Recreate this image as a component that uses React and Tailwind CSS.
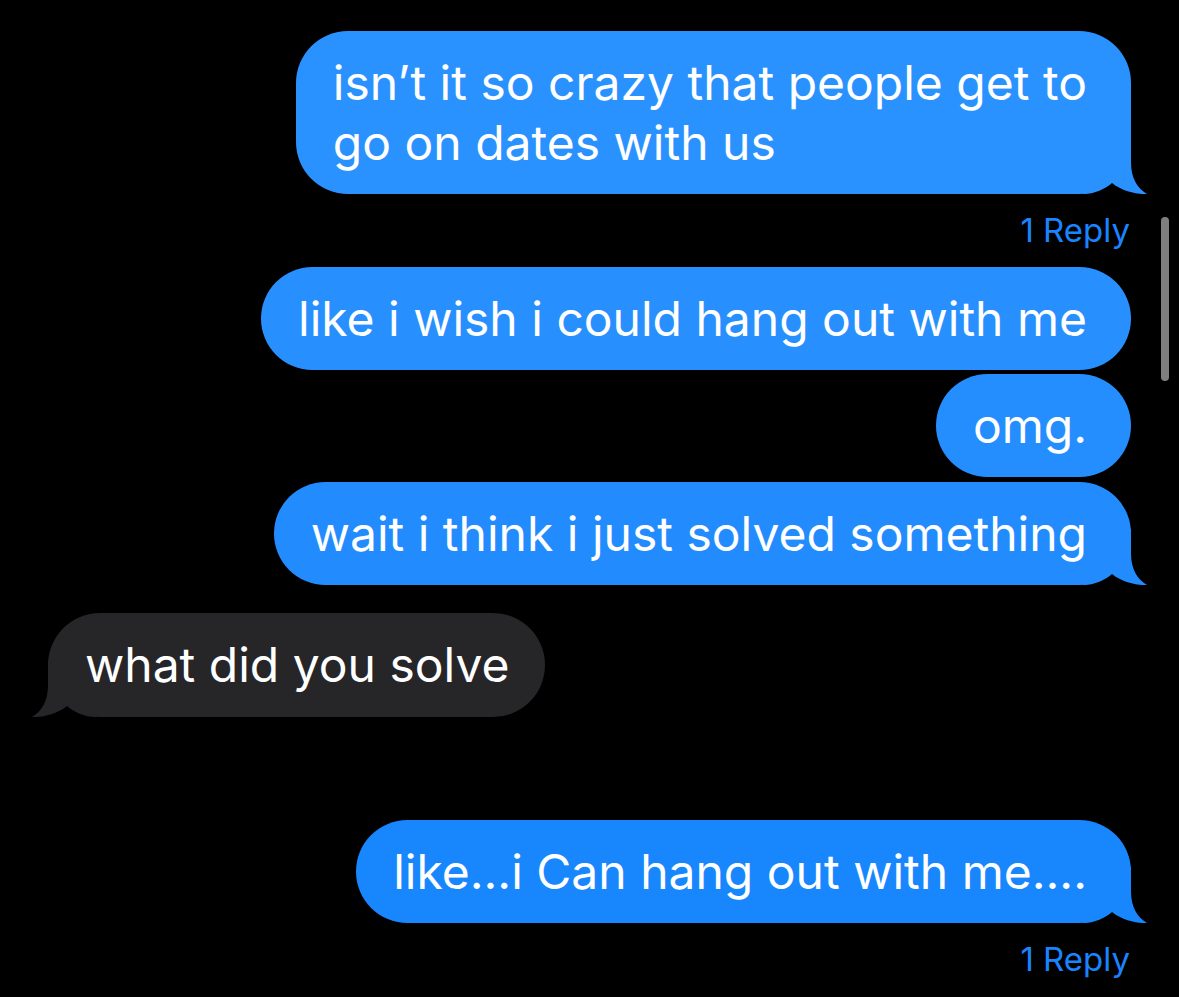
import React from 'react';

const font = { fontFamily: 'Inter, "Noto Sans", sans-serif' };

function TailRight({ color }) {
    return (
        <svg className="absolute -right-[16px] bottom-0" width="64" height="56" viewBox="0 0 64 56">
            <path d="M0 0 H48 V24 C48 40 54 50 64 56 C56 56.5 40 54 29 45 C22 51 12 56 0 56 Z" fill={color} />
        </svg>
    );
}

function TailLeft({ color }) {
    return (
        <svg className="absolute -left-[16px] bottom-0" width="64" height="56" viewBox="0 0 64 56">
            <path d="M64 0 H16 V24 C16 40 10 50 0 56 C8 56.5 24 54 35 45 C42 51 52 56 64 56 Z" fill={color} />
        </svg>
    );
}

function Sent({ text, color, className = '', tail = false }) {
    return (
        <div className={`flex justify-end ${className}`}>
            <div
                className="relative rounded-[52px] pl-[37px] pr-[44px] pt-[22px] pb-[21px] text-white text-[48px] leading-[60px]"
                style={{ backgroundColor: color }}
            >
                <span className="relative z-10">{text}</span>
                {tail && <TailRight color={color} />}
            </div>
        </div>
    );
}

function Received({ text, className = '' }) {
    return (
        <div className={`flex justify-start ${className}`}>
            <div className="relative rounded-[52px] bg-[#262629] pl-[37px] pr-[36px] pt-[22px] pb-[22px] text-white text-[48px] leading-[60px]">
                <span className="relative z-10">{text}</span>
                <TailLeft color="#262629" />
            </div>
        </div>
    );
}

function Reply({ className = '' }) {
    return (
        <div className={`flex justify-end pr-[1px] ${className}`}>
            <span className="text-[33px] leading-[44px] text-[#1a84ff]">1 Reply</span>
        </div>
    );
}

export default function App() {
    return (
        <div className="relative w-[1179px] h-[997px] bg-black overflow-hidden" style={font}>
            <div className="flex flex-col px-12 pt-[31px]">
                <Sent
                    text={<>isn’t it so crazy that people get to<br />go on dates with us</>}
                    color="#2a92fe"
                    tail
                />
                <Reply className="mt-[14px]" />
                <Sent text="like i wish i could hang out with me" color="#2890fe" className="mt-[15px]" />
                <Sent text="omg." color="#258efe" className="mt-[4px]" />
                <Sent text="wait i think i just solved something" color="#228cfe" tail className="mt-[5px]" />
                <Received text="what did you solve" className="mt-[28px]" />
                <Sent text="like...i Can hang out with me...." color="#1887fe" tail className="mt-[103px]" />
                <Reply className="mt-[14px]" />
            </div>
            <div className="absolute right-[10px] top-[217px] h-[164px] w-[8px] rounded-full bg-[#7f7f7f]" />
        </div>
    );
}
